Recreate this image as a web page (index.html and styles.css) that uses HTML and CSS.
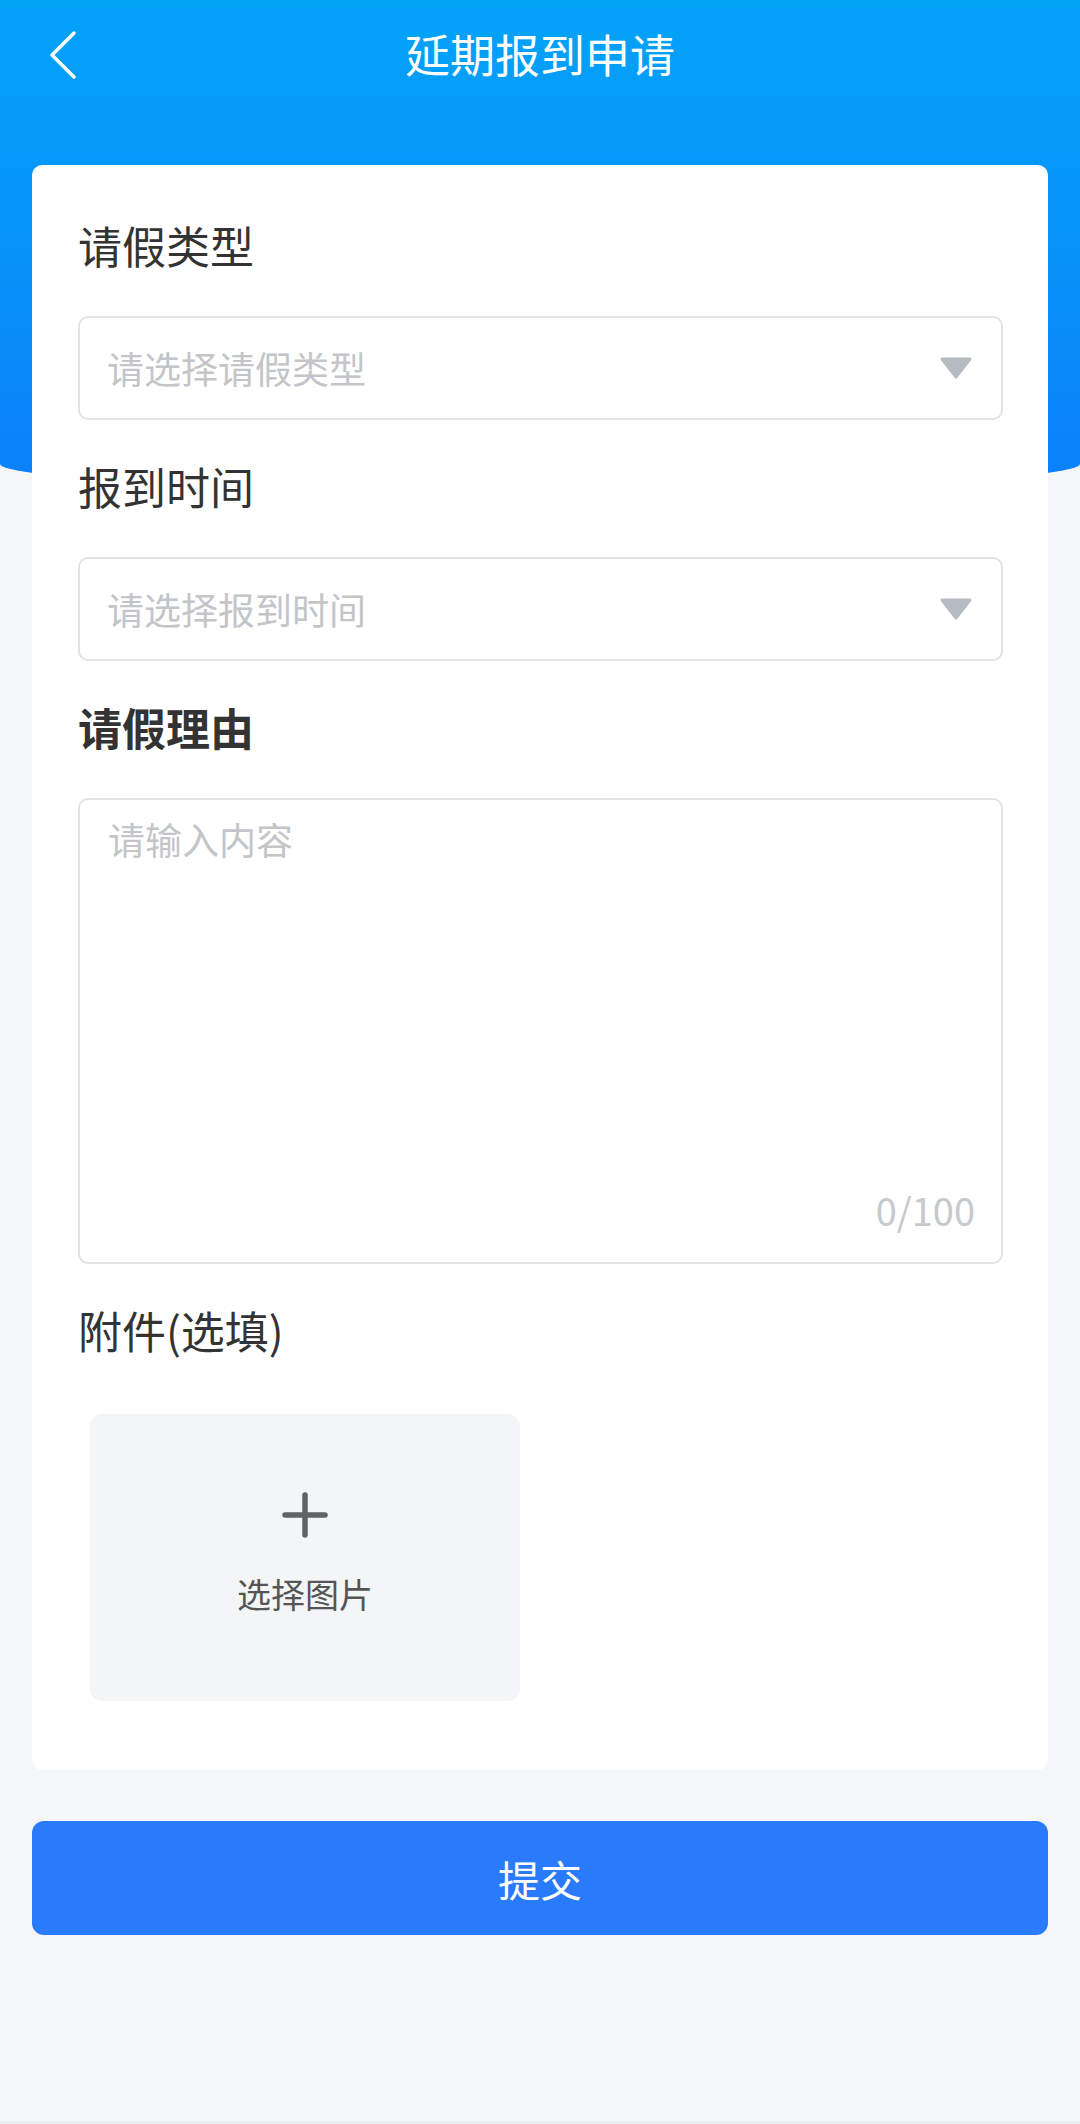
FILE: index.html
```html
<!DOCTYPE html>
<html lang="zh-CN">
<head>
    <meta charset="UTF-8">
    <meta name="viewport" content="width=device-width, initial-scale=1.0">
    <title>延期报到申请</title>
    <link rel="stylesheet" href="styles.css">
</head>
<body>
    <div class="page">
        <div class="topbar">
            <div class="navbar">
                <div class="back">
                    <svg width="44" height="60" viewBox="0 0 44 60">
                        <polyline points="34,9 12,31 34,53" fill="none" stroke="#fff" stroke-width="3.5" stroke-linecap="round" stroke-linejoin="round"/>
                    </svg>
                </div>
                <div class="title">延期报到申请</div>
                <div></div>
            </div>
        </div>

        <div class="card">
            <div class="field">
                <div class="label">请假类型</div>
                <div class="select">
                    <span class="placeholder">请选择请假类型</span>
                    <svg class="arrow" width="34" height="24" viewBox="0 0 34 24">
                        <polygon points="3,3 31,3 17,21" fill="#b6bac1" stroke="#b6bac1" stroke-width="3" stroke-linejoin="round"/>
                    </svg>
                </div>
            </div>
            <div class="field">
                <div class="label">报到时间</div>
                <div class="select">
                    <span class="placeholder">请选择报到时间</span>
                    <svg class="arrow" width="34" height="24" viewBox="0 0 34 24">
                        <polygon points="3,3 31,3 17,21" fill="#b6bac1" stroke="#b6bac1" stroke-width="3" stroke-linejoin="round"/>
                    </svg>
                </div>
            </div>
            <div class="field">
                <div class="label bold">请假理由</div>
                <div class="textarea">
                    <span class="placeholder">请输入内容</span>
                    <span class="counter">0/100</span>
                </div>
            </div>
            <div class="field last">
                <div class="label">附件(选填)</div>
                <div class="upload">
                    <svg width="46" height="46" viewBox="0 0 46 46">
                        <path d="M23 3 V43 M3 23 H43" stroke="#606266" stroke-width="5.5" stroke-linecap="round"/>
                    </svg>
                    <span class="upload-text">选择图片</span>
                </div>
            </div>
        </div>

        <button class="submit">提交</button>
    </div>
</body>
</html>
```

FILE: styles.css
```css
* {
    box-sizing: border-box;
}
body {
    margin: 0;
    background-color: #f5f6f8;
    font-family: "Noto Sans CJK SC", "Noto Sans", sans-serif;
    color: #333;
}
.page {
    min-height: 2124px;
    border-bottom: 3px solid #eceef1;
}
.topbar {
    height: 490px;
    background: linear-gradient(180deg, #03a3f8 0%, #0791f9 55%, #0b80fa 100%);
    border-bottom-left-radius: 50% 26px;
    border-bottom-right-radius: 50% 26px;
}
.navbar {
    height: 108px;
    display: grid;
    grid-template-columns: 130px 1fr 130px;
    align-items: center;
}
.back {
    padding-left: 40px;
    display: flex;
    align-items: center;
}
.title {
    text-align: center;
    color: #fff;
    font-size: 45px;
    line-height: 60px;
}
.card {
    margin: -325px 32px 0;
    background: #fff;
    border-radius: 10px;
    padding: 50px 45px 69px 46px;
}
.field {
    margin-bottom: 36px;
}
.field.last {
    margin-bottom: 0;
}
.label {
    font-size: 44px;
    line-height: 60px;
    color: #333;
    margin-bottom: 41px;
}
.label.bold {
    font-weight: 700;
}
.field.last .label {
    margin-bottom: 54px;
}
.select {
    height: 104px;
    border: 2px solid #e2e3e5;
    border-radius: 10px;
    display: flex;
    align-items: center;
    justify-content: space-between;
    padding: 0 28px 0 27px;
}
.placeholder {
    font-size: 37px;
    line-height: 50px;
    color: #c3c5c9;
}
.textarea {
    height: 466px;
    border: 2px solid #e2e3e5;
    border-radius: 10px;
    display: flex;
    flex-direction: column;
    justify-content: space-between;
    padding: 14px 26px 27px 28px;
}
.counter {
    align-self: flex-end;
    font-size: 38px;
    line-height: 50px;
    color: #c8c9cc;
}
.upload {
    margin-left: 12px;
    width: 430px;
    height: 287px;
    background: #f4f5f7;
    border-radius: 12px;
    display: flex;
    flex-direction: column;
    align-items: center;
    padding-top: 78px;
    gap: 36px;
}
.upload-text {
    font-size: 34px;
    line-height: 40px;
    color: #555;
}
.submit {
    display: block;
    width: calc(100% - 64px);
    margin: 51px 32px 0;
    height: 114px;
    border: none;
    border-radius: 12px;
    background: #2a7afc;
    color: #fff;
    font-family: "Noto Sans CJK SC", "Noto Sans", sans-serif;
    font-size: 42px;
    cursor: pointer;
}
```
